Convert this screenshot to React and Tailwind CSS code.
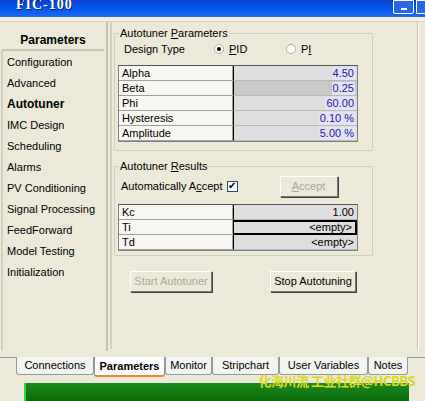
import React from "react";

const navItems = [
  "Configuration",
  "Advanced",
  "Autotuner",
  "IMC Design",
  "Scheduling",
  "Alarms",
  "PV Conditioning",
  "Signal Processing",
  "FeedForward",
  "Model Testing",
  "Initialization",
];

const params = [
  { label: "Alpha", value: "4.50" },
  { label: "Beta", value: "0.25", selected: true },
  { label: "Phi", value: "60.00" },
  { label: "Hysteresis", value: "0.10 %" },
  { label: "Amplitude", value: "5.00 %" },
];

const results = [
  { label: "Kc", value: "1.00" },
  { label: "Ti", value: "<empty>", focused: true },
  { label: "Td", value: "<empty>" },
];

const tabs = [
  { name: "Connections", w: "w-[78px]" },
  { name: "Parameters", w: "w-[71px]" },
  { name: "Monitor", w: "w-[47px]" },
  { name: "Stripchart", w: "w-[67px]" },
  { name: "User Variables", w: "w-[89px]" },
  { name: "Notes", w: "w-[40px]" },
];

const GridTable = ({ rows, highlight }) => (
  <div className="border border-[#808080] border-t-[#555] bg-[#f4f3ee] w-[240px]">
    {rows.map((r) => (
      <div key={r.label} className="flex h-[15px]">
        <div className="w-[114px] border-b border-r border-[#a0a0a0] bg-[#f7f6f0] pl-[3px] leading-[14px]">
          {r.label}
        </div>
        <div
          className={`flex-1 border-l border-l-black flex justify-end items-center pr-[2px] ${
            r.focused ? "border-2 border-black" : "border-b border-[#b8b8b8]"
          } ${r.selected ? "bg-[#c8c8c8]" : "bg-[#dedede]"}`}
        >
          <span className={`leading-[13px] px-[1px] ${highlight ? "text-[#1c1c9c] bg-[#e4e2f4]" : "text-black"}`}>
            {r.value}
          </span>
        </div>
      </div>
    ))}
  </div>
);

const GroupBox = ({ title, children, className }) => (
  <div className={`relative border border-[#d0d0bf] rounded-[2px] ${className}`}>
    <span className="absolute -top-[8px] left-[4px] bg-[#ece9d8] px-[1px] leading-[14px]">{title}</span>
    {children}
  </div>
);

const XPButton = ({ children, disabled, className }) => (
  <div
    className={`h-[21px] flex items-center justify-center border border-[#7a7a7a] border-t-white border-l-white shadow-[1px_1px_0_#404040] bg-[#ece9d8] ${
      disabled ? "text-[#aca899]" : "text-black"
    } ${className}`}
  >
    {children}
  </div>
);

export default function App() {
  return (
    <div
      className="w-[425px] h-[401px] bg-[#ece9d8] overflow-hidden flex flex-col text-[11px] text-black"
      style={{ fontFamily: '"Liberation Sans", Arial, "Noto Sans CJK SC", sans-serif' }}
    >
      {/* title bar */}
      <div className="h-[17px] bg-gradient-to-b from-[#0a3fc8] via-[#0058ee] to-[#1d6af0] flex justify-between pl-[16px] shrink-0 overflow-hidden">
        <span
          className="text-white font-bold text-[14px] leading-[14px] tracking-[1px] -translate-y-[2px]"
          style={{ fontFamily: '"Liberation Serif", "Times New Roman", serif', textShadow: "1px 1px 0 #0a1f6a" }}
        >
          FIC-100
        </span>
        <div className="flex gap-[2px] h-[14px] pr-0">
          <div className="w-[21px] h-[14px] border border-white rounded-b-[2px] bg-[#2a66e6] flex items-end justify-center">
            <div className="w-[6px] h-[2px] bg-white mb-[3px]" />
          </div>
          <div className="w-[9px] h-[14px] border border-white border-r-0 rounded-bl-[2px] bg-[#2a66e6]" />
        </div>
      </div>
      <div className="h-[5px] bg-[#f1efe2] border-b border-[#d8d5c5] shrink-0" />

      <div className="flex flex-1 min-h-0">
        {/* left nav */}
        <div className="w-[108px] shrink-0 flex flex-col border-r-2 border-[#c5c2b2] h-[329px] pt-[8px]">
          <div className="h-[21px] mx-[2px] flex items-center justify-center font-bold text-[12px] border-b-2 border-[#c8c5b5]">
            Parameters
          </div>
          <div className="flex-1 border-l-2 border-[#d4d0c0] ml-[1px] pt-[1px]">
            {navItems.map((n) => (
              <div key={n} className={`h-[21px] leading-[21px] pl-[4px] ${n === "Autotuner" ? "font-bold text-[12px]" : ""}`}>
                {n}
              </div>
            ))}
          </div>
        </div>

        {/* right content */}
        <div className="flex-1 border-l-2 border-[#d4d0c0] ml-[2px] pl-[2px] pt-[11px] pr-[52px] relative">
          <GroupBox title={<span>Autotuner <u>P</u>arameters</span>} className="h-[118px] pt-[7px] px-[3px]">
            <div className="flex items-center h-[16px] pl-[6px]">
              <span className="w-[90px]">Design Type</span>
              <span className="flex items-center gap-[5px] w-[72px]">
                <span className="w-[10px] h-[10px] rounded-full border border-[#b0b0a0] bg-white flex items-center justify-center">
                  <span className="w-[4px] h-[4px] rounded-full bg-black" />
                </span>
                <span>
                  <u>P</u>ID
                </span>
              </span>
              <span className="flex items-center gap-[5px]">
                <span className="w-[10px] h-[10px] rounded-full border border-[#b0b0a0] bg-white" />
                <span>
                  P<u>I</u>
                </span>
              </span>
            </div>
            <div className="mt-[8px]">
              <GridTable rows={params} highlight />
            </div>
          </GroupBox>

          <GroupBox title={<span>Autotuner <u>R</u>esults</span>} className="mt-[15px] h-[90px] pt-[8px] px-[3px]">
            <div className="flex items-center h-[22px] pl-[3px]">
              <span>
                Automatically A<u>c</u>cept
              </span>
              <span className="ml-[4px] w-[11px] h-[11px] border border-[#1c5180] bg-white flex items-center justify-center text-[10px] leading-none">
                ✔
              </span>
              <XPButton disabled className="ml-[42px] w-[58px] h-[19px]">
                <span>
                  <u>A</u>ccept
                </span>
              </XPButton>
            </div>
            <div className="mt-[7px]">
              <GridTable rows={results} />
            </div>
          </GroupBox>

          <div className="flex mt-[15px] pl-[16px]">
            <XPButton disabled className="w-[82px]">
              Start Autotuner
            </XPButton>
            <XPButton className="w-[86px] ml-[58px]">Stop Autotuning</XPButton>
          </div>
          <div className="absolute right-[6px] top-0 bottom-0 border-l border-[#c5c2b2] border-r border-r-white" />
        </div>
      </div>

      {/* tabs */}
      <div className="relative h-[52px] shrink-0">
        <div className="absolute top-[8px] left-0 right-0 border-t border-[#919b9c]" />
        <div className="flex pl-[16px] pt-[8px] relative">
          {tabs.map((t) => {
            const active = t.name === "Parameters";
            return (
              <div
                key={t.name}
                className={`${t.w} h-[18px] flex items-center justify-center border border-[#919b9c] border-t-0 rounded-b-[3px] ${
                  active ? "font-bold bg-[#fcfcfe] h-[20px] border-b-2 border-b-[#e68b2c]" : "bg-[#f3f3ef]"
                }`}
              >
                {t.name}
              </div>
            );
          })}
        </div>
        <div className="absolute left-[24px] right-[16px] top-[34px] h-[18px] bg-gradient-to-b from-[#1c8a1c] to-[#0a6a0a] border-l-2 border-[#3ad43a]" />
        <div
          className="absolute right-[10px] top-[22px] text-[#d8d820] text-[13px] font-bold tracking-[-0.5px]"
          style={{ fontFamily: '"Noto Sans CJK SC", sans-serif' }}
        >
          化海川流 工业社群@HCBBS
        </div>
      </div>
    </div>
  );
}
